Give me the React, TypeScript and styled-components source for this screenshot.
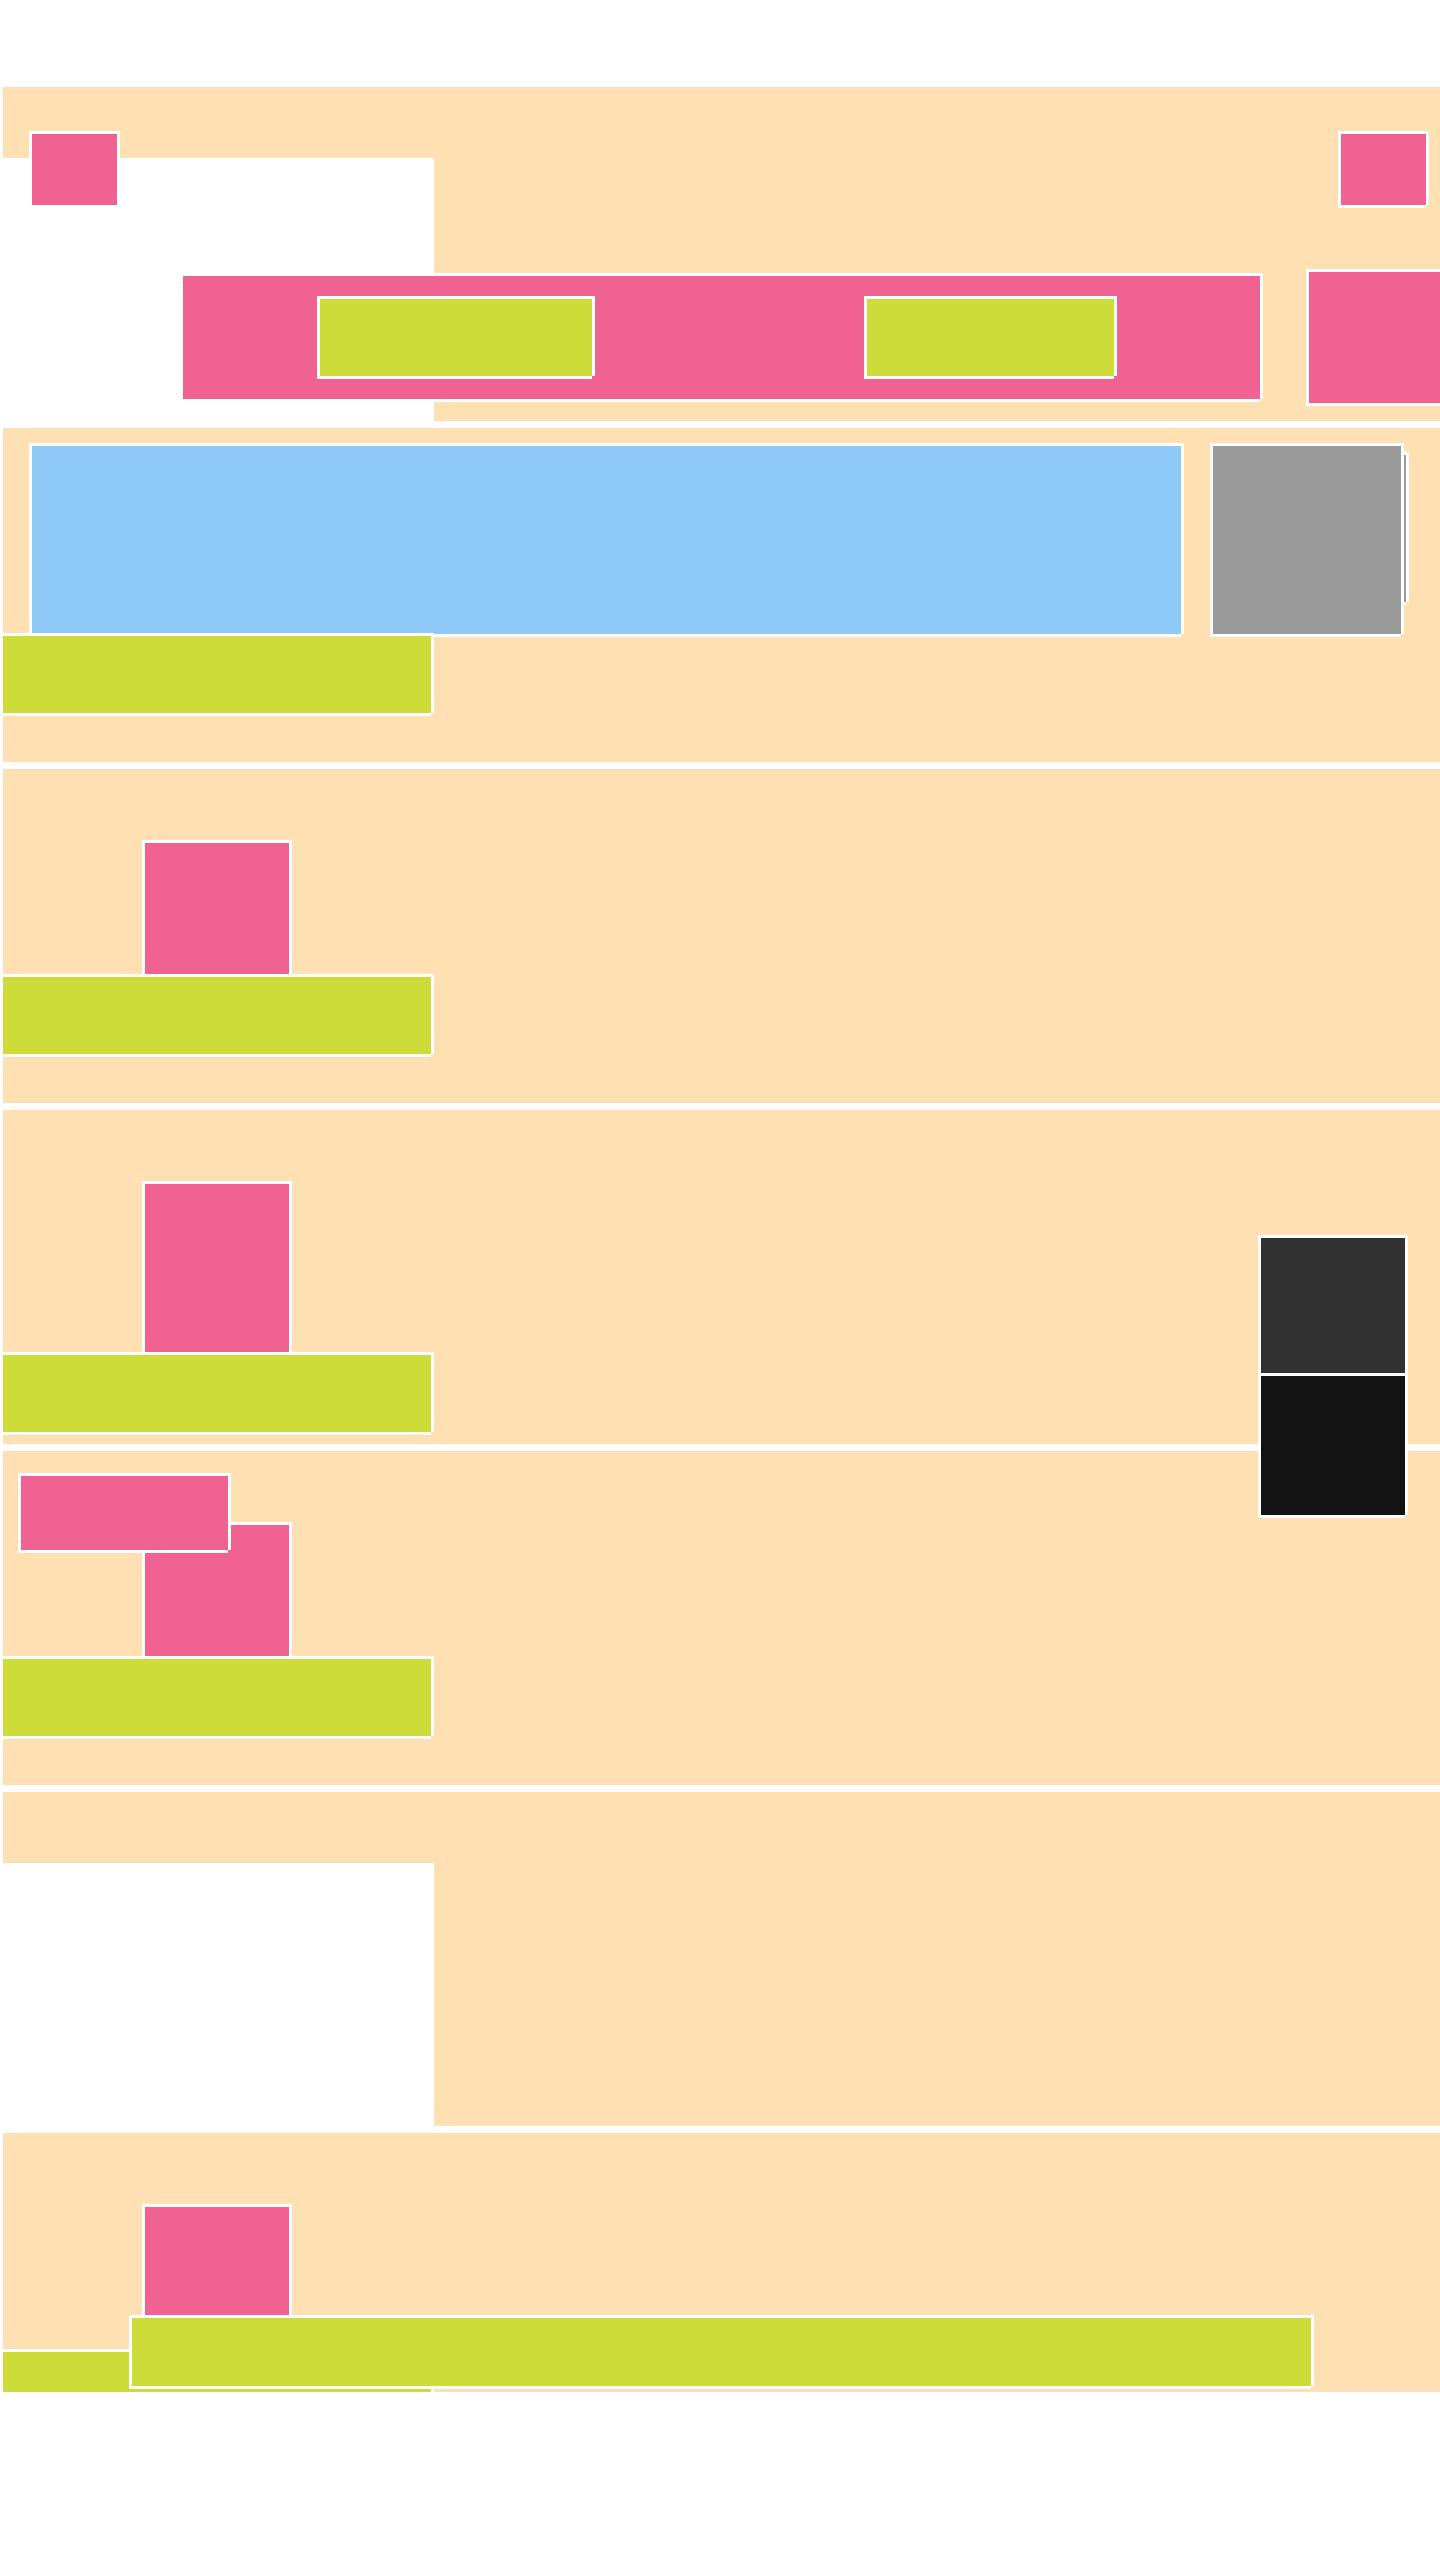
import React from "react";
import styled, { createGlobalStyle } from "styled-components";

const colors = {
  beige: "#ffe0b2",
  pink: "#f06292",
  lime: "#cddc39",
  blue: "#90caf9",
  gray: "#9b9b9b",
  dark: "#323232",
  black: "#131313",
};

type Tone = keyof typeof colors;

// white 3px frame with the bottom-right corner left open
const frame = `
  box-shadow: -3px -3px 0 #fff, 3px -3px 0 #fff, -3px 3px 0 #fff,
    3px 0 0 #fff, 0 3px 0 #fff;
`;

const GlobalStyle = createGlobalStyle`
  html, body {
    margin: 0;
    background: #fff;
    font-family: "Liberation Sans", Arial, sans-serif;
  }
`;

const App: React.FC = () => {
  return (
    <>
      <GlobalStyle />
      <Page>
        <Panel>
          <WhiteInset />
          <TopRow>
            <Tile $tone="pink" $w={85} $h={71} />
            <Tile $tone="pink" $w={85} $h={71} />
          </TopRow>
          <BarRow>
            <PinkBar>
              <Tile $tone="lime" $w={272} $h={77} />
              <Tile $tone="lime" $w={247} $h={77} />
            </PinkBar>
            <Tile $tone="pink" $w={150} $h={131} />
          </BarRow>
        </Panel>

        <Panel>
          <ViewRow>
            <Tile $tone="blue" $w={1149} $h={188} />
            <GraySlot>
              <GhostCard />
              <FrontCard $tone="gray" $w={188} $h={188} />
            </GraySlot>
          </ViewRow>
          <Tile $tone="lime" $w={428} $h={77} $y={208} />
        </Panel>

        <Panel>
          <Tile $tone="pink" $w={144} $h={131} $x={142} $y={74} />
          <Tile $tone="lime" $w={428} $h={77} $y={208} />
        </Panel>

        <Panel>
          <Tile $tone="pink" $w={144} $h={168} $x={142} $y={74} />
          <Tile $tone="lime" $w={428} $h={77} $y={245} />
          <DarkStack>
            <Tile $tone="dark" $w={144} $h={135} />
            <Tile $tone="black" $w={144} $h={139} />
          </DarkStack>
        </Panel>

        <Panel>
          <Tile $tone="pink" $w={144} $h={131} $x={142} $y={74} />
          <Tile $tone="lime" $w={428} $h={77} $y={208} />
          <Tile $tone="pink" $w={207} $h={74} $x={18} $y={25} />
        </Panel>

        <Panel>
          <WhiteInset />
        </Panel>

        <Panel>
          <Tile $tone="pink" $w={144} $h={108} $x={142} $y={74} />
          <Tile $tone="lime" $w={428} $h={77} $y={219} />
          <Tile $tone="lime" $w={1179} $h={68} $x={129} $y={185} />
        </Panel>
      </Page>
    </>
  );
};

const Page = styled.main`
  box-sizing: border-box;
  width: 1440px;
  height: 2392px;
  overflow: hidden;
  padding: 87px 0 0 3px;
  display: flex;
  flex-direction: column;
  gap: 7px;
`;

const Panel = styled.section`
  flex-shrink: 0;
  display: grid;
  grid-template-columns: 100%;
  grid-template-rows: 100%;
  height: 334px;
  background: ${colors.beige};

  & > * {
    grid-area: 1 / 1;
    align-self: start;
    justify-self: start;
  }
`;

const Tile = styled.div<{ $tone: Tone; $w: number; $h: number; $x?: number; $y?: number }>`
  flex-shrink: 0;
  width: ${(p) => p.$w}px;
  height: ${(p) => p.$h}px;
  margin-left: ${(p) => p.$x ?? 0}px;
  margin-top: ${(p) => p.$y ?? 0}px;
  background: ${(p) => colors[p.$tone]};
  ${frame}
`;

const WhiteInset = styled.div`
  && {
    align-self: end;
  }
  width: 431px;
  height: 263px;
  background: #fff;
`;

const TopRow = styled.div`
  && {
    justify-self: stretch;
  }
  display: flex;
  justify-content: space-between;
  padding: 47px 14px 0 29px;
`;

const BarRow = styled.div`
  display: flex;
  align-items: flex-start;
  gap: 49px;
  width: max-content;
  padding: 185px 0 0 180px;
`;

const PinkBar = styled.div`
  flex-shrink: 0;
  display: flex;
  align-items: center;
  gap: 275px;
  box-sizing: border-box;
  width: 1077px;
  height: 123px;
  margin-top: 4px;
  padding-left: 137px;
  background: ${colors.pink};
  ${frame}
`;

const ViewRow = styled.div`
  display: flex;
  gap: 32px;
  width: max-content;
  padding: 18px 0 0 29px;
`;

const GraySlot = styled.div`
  position: relative;
`;

const GhostCard = styled.div`
  position: absolute;
  top: 9px;
  right: -5px;
  width: 160px;
  height: 147px;
  background: ${colors.gray};
  ${frame}
`;

const FrontCard = styled(Tile)`
  position: relative;
`;

const DarkStack = styled.div`
  position: relative;
  z-index: 2;
  display: flex;
  flex-direction: column;
  gap: 3px;
  margin: 128px 0 0 1258px;
`;

export default App;
